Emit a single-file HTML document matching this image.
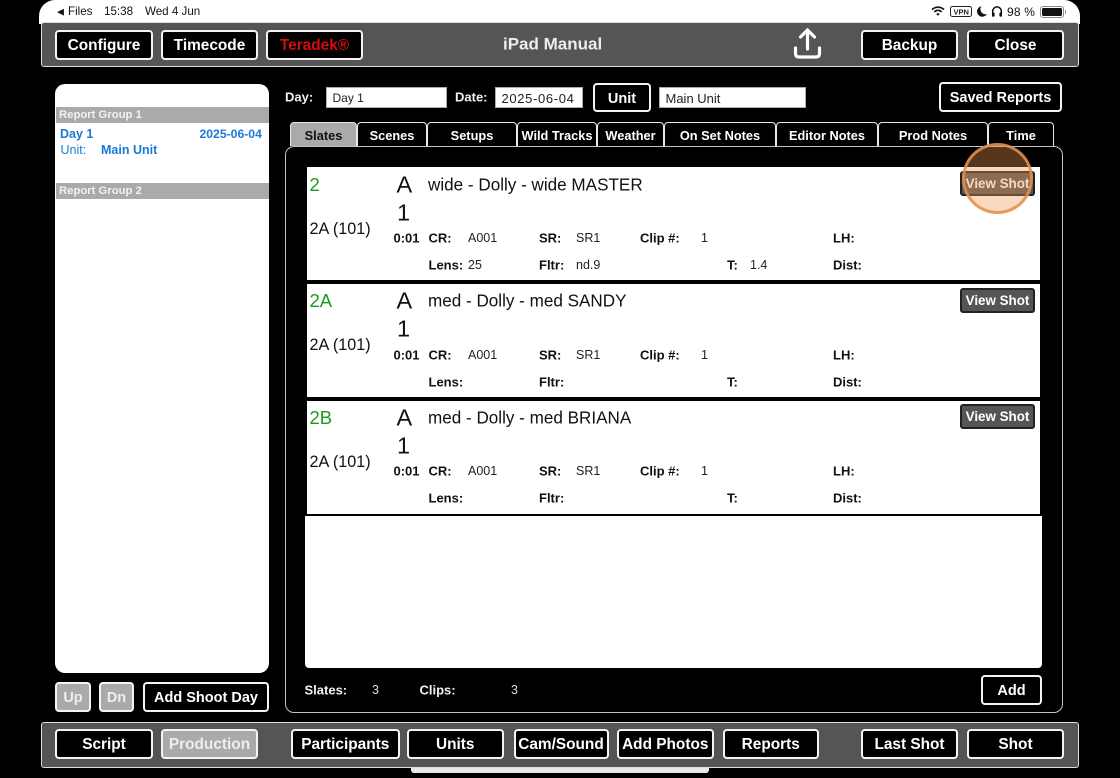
<!DOCTYPE html>
<html><head><meta charset="utf-8"><style>
html,body{margin:0;padding:0;background:#000;}
#p{position:relative;width:1120px;height:778px;overflow:hidden;background:#000;font-family:"Liberation Sans",sans-serif;filter:blur(.35px);}
#p div{position:absolute;box-sizing:border-box;}
.t{white-space:nowrap;transform:translateY(-50%);line-height:1;}
.b{background:#000;border:2px solid #f4f4f4;border-radius:4px;color:#fff;font-weight:bold;font-size:15.4px;display:flex;align-items:center;justify-content:center;white-space:nowrap;padding-top:2px;}
.g{background:#aaa;color:#eee;}
.tab{top:122px;height:24px;background:#000;border:1.5px solid #e8e8e8;border-bottom:0;border-radius:4px 4px 0 0;color:#fff;font-weight:bold;font-size:12.8px;display:flex;align-items:center;justify-content:center;white-space:nowrap;padding-top:2px;}
.inp{background:#fff;border:1.5px solid #aaa;color:#222;font-size:13px;line-height:17px;padding:2px 0 0 5.5px;height:21px;}
.l{font-size:13px;font-weight:bold;color:#111;}
.v{font-size:12.5px;color:#222;}
.big{font-size:23.5px;color:#111;}
.ti{font-size:17.1px;color:#111;}
.gr{font-size:18.5px;color:#1d9a1d;}
.sc{font-size:16.2px;color:#111;}
.vs{left:960px;width:75px;height:25px;background:#555;border:2px solid #222;border-radius:3px;color:#fff;font-size:13.4px;font-weight:bold;display:flex;align-items:center;justify-content:center;white-space:nowrap;}
.row{left:307px;width:733px;height:113px;background:#fff;}
.st{font-size:11.6px;color:#111;}
.gh{left:56px;width:213px;height:16px;background:#aaa;color:#f2f2f2;font-size:11.3px;font-weight:bold;line-height:16px;padding-left:3px;}
.bl{color:#1a7ad6;font-size:12.5px;}
.wl{font-size:13px;font-weight:bold;color:#f0f0f0;}
.wv{font-size:12.5px;color:#ddd;}
</style></head><body><div id="p">

<div style="left:39px;top:0;width:1041px;height:24px;background:#fff;border-radius:16px 16px 0 0"></div>
<div class="t st" style="left:57px;top:12px;font-size:9px">◀</div>
<div class="t st" style="left:68px;top:12px">Files</div>
<div class="t st" style="left:104px;top:12px">15:38</div>
<div class="t st" style="left:145px;top:12px">Wed 4 Jun</div>
<svg style="position:absolute;left:930px;top:5px" width="16" height="12" viewBox="0 0 16 12"><path d="M2 4.6C5.6 1.4 10.4 1.4 14 4.6M4.3 6.9C6.6 4.9 9.4 4.9 11.7 6.9" fill="none" stroke="#111" stroke-width="1.7"/><path d="M6.2 8.9C7.3 8 8.7 8 9.8 8.9L8 10.8Z" fill="#111"/></svg>
<div style="left:950px;top:6px;width:22px;height:11px;border:1px solid #222;border-radius:2.5px"></div>
<div class="t" style="left:953.5px;top:11.5px;font-size:7.5px;font-weight:bold;color:#222">VPN</div>
<svg style="position:absolute;left:976px;top:5px" width="12" height="13" viewBox="0 0 12 13"><path d="M5.5 1.2A5.3 5.3 0 1 0 11 9 5 5 0 0 1 5.5 1.2Z" fill="#111"/></svg>
<svg style="position:absolute;left:991px;top:5px" width="12" height="13" viewBox="0 0 12 13"><path d="M1.7 9V6.2a4.3 4.3 0 0 1 8.6 0V9" fill="none" stroke="#111" stroke-width="1.5"/><rect x="1" y="7.5" width="2.6" height="4.2" rx="1" fill="#111"/><rect x="8.4" y="7.5" width="2.6" height="4.2" rx="1" fill="#111"/></svg>
<div class="t st" style="left:1007px;top:12px;font-size:12px;letter-spacing:.2px">98 %</div>
<div style="left:1040px;top:6px;width:24px;height:11.5px;border:1px solid #888;border-radius:3px"></div>
<div style="left:1041.5px;top:7.5px;width:20px;height:8.5px;background:#111;border-radius:1.5px"></div>
<div style="left:1064.5px;top:10px;width:1.5px;height:4px;background:#999"></div>

<div style="left:41px;top:22px;width:1038px;height:45px;background:#555;border:1.5px solid #ddd;border-radius:3px"></div>
<div class="b" style="left:55px;top:30px;width:98px;height:30px">Configure</div>
<div class="b" style="left:161px;top:30px;width:97px;height:30px">Timecode</div>
<div class="b" style="left:266px;top:30px;width:97px;height:30px;color:#d40d0d">Teradek®</div>
<div class="t" style="left:503px;top:44px;font-size:17px;font-weight:bold;color:#eee">iPad Manual</div>
<svg style="position:absolute;left:792px;top:27px" width="31" height="33" viewBox="0 0 31 33"><path d="M15.500 22V3.500M8.500 10L15.500 3L22.500 10" fill="none" stroke="#fff" stroke-width="3.200" stroke-linecap="round" stroke-linejoin="miter"/><path d="M3.500 21V26.500Q3.500 30 7 30H24Q27.500 30 27.500 26.500V21" fill="none" stroke="#fff" stroke-width="3.200" stroke-linecap="round"/></svg>
<div class="b" style="left:861px;top:30px;width:97px;height:30px">Backup</div>
<div class="b" style="left:967px;top:30px;width:97px;height:30px">Close</div>

<div style="left:55px;top:84px;width:214px;height:589px;background:#fff;border-radius:10px"></div>
<div class="gh" style="top:107px">Report Group 1</div>
<div class="t bl" style="left:60px;top:133.500px;font-weight:bold">Day 1</div>
<div class="t bl" style="left:199.500px;top:133.500px;font-weight:bold;font-size:12.200px">2025-06-04</div>
<div class="t bl" style="left:60.500px;top:149.500px">Unit:</div>
<div class="t bl" style="left:101px;top:149.500px;font-weight:bold">Main Unit</div>
<div class="gh" style="top:183px">Report Group 2</div>

<div class="t wl" style="left:285px;top:97px">Day:</div>
<div class="inp" style="left:326px;top:87px;width:121px;font-size:12px">Day 1</div>
<div class="t wl" style="left:455px;top:97px">Date:</div>
<div class="inp" style="left:495px;top:87px;width:88px;letter-spacing:.65px">2025-06-04</div>
<div class="b" style="left:593px;top:83px;width:58px;height:29px;font-size:14.500px">Unit</div>
<div class="inp" style="left:659px;top:87px;width:147px">Main Unit</div>
<div class="b" style="left:939px;top:82px;width:123px;height:30px;font-size:14.500px">Saved Reports</div>

<div style="left:285px;top:146px;width:778px;height:567px;border:1.200px solid #c4c4c4;border-radius:9px"></div>
<div class="tab" style="left:290px;width:67px;background:#aaa;color:#111">Slates</div>
<div class="tab" style="left:357px;width:70px">Scenes</div>
<div class="tab" style="left:427px;width:90px">Setups</div>
<div class="tab" style="left:517px;width:80px">Wild Tracks</div>
<div class="tab" style="left:597px;width:67px">Weather</div>
<div class="tab" style="left:664px;width:112px">On Set Notes</div>
<div class="tab" style="left:776px;width:102px">Editor Notes</div>
<div class="tab" style="left:878px;width:110px">Prod Notes</div>
<div class="tab" style="left:988px;width:66px">Time</div>

<div style="left:305px;top:516px;width:737px;height:151.500px;background:#fff;border-radius:0 0 4px 4px"></div>

<div class="row" style="top:167px"></div>
<div class="t gr" style="left:309.500px;top:184.500px">2</div>
<div class="t big" style="left:396.500px;top:184.500px">A</div>
<div class="t big" style="left:397px;top:212.500px">1</div>
<div class="t ti" style="left:428px;top:184.500px">wide - Dolly - wide MASTER</div>
<div class="t sc" style="left:309.500px;top:228.500px">2A (101)</div>
<div class="t l" style="left:393.500px;top:238px">0:01</div>
<div class="t l" style="left:428.500px;top:238px">CR:</div>
<div class="t v" style="left:468px;top:238px">A001</div>
<div class="t l" style="left:539px;top:238px">SR:</div>
<div class="t v" style="left:576px;top:238px">SR1</div>
<div class="t l" style="left:640px;top:238px">Clip #:</div>
<div class="t v" style="left:701px;top:238px">1</div>
<div class="t l" style="left:833px;top:238px">LH:</div>
<div class="t l" style="left:428.500px;top:265px">Lens:</div>
<div class="t v" style="left:468px;top:265px">25</div>
<div class="t l" style="left:539px;top:265px">Fltr:</div>
<div class="t v" style="left:576px;top:265px">nd.9</div>
<div class="t l" style="left:727px;top:265px">T:</div>
<div class="t v" style="left:750px;top:265px">1.4</div>
<div class="t l" style="left:833px;top:265px">Dist:</div>
<div class="vs" style="top:171px">View Shot</div>

<div class="row" style="top:284px"></div>
<div class="t gr" style="left:309.500px;top:301px">2A</div>
<div class="t big" style="left:396.500px;top:301px">A</div>
<div class="t big" style="left:397px;top:329px">1</div>
<div class="t ti" style="left:428px;top:301px">med - Dolly - med SANDY</div>
<div class="t sc" style="left:309.500px;top:345px">2A (101)</div>
<div class="t l" style="left:393.500px;top:354.500px">0:01</div>
<div class="t l" style="left:428.500px;top:354.500px">CR:</div>
<div class="t v" style="left:468px;top:354.500px">A001</div>
<div class="t l" style="left:539px;top:354.500px">SR:</div>
<div class="t v" style="left:576px;top:354.500px">SR1</div>
<div class="t l" style="left:640px;top:354.500px">Clip #:</div>
<div class="t v" style="left:701px;top:354.500px">1</div>
<div class="t l" style="left:833px;top:354.500px">LH:</div>
<div class="t l" style="left:428.500px;top:381.500px">Lens:</div>
<div class="t l" style="left:539px;top:381.500px">Fltr:</div>
<div class="t l" style="left:727px;top:381.500px">T:</div>
<div class="t l" style="left:833px;top:381.500px">Dist:</div>
<div class="vs" style="top:288px">View Shot</div>

<div class="row" style="top:400.500px"></div>
<div class="t gr" style="left:309.500px;top:417.500px">2B</div>
<div class="t big" style="left:396.500px;top:417.500px">A</div>
<div class="t big" style="left:397px;top:445.500px">1</div>
<div class="t ti" style="left:428px;top:417.500px">med - Dolly - med BRIANA</div>
<div class="t sc" style="left:309.500px;top:461.500px">2A (101)</div>
<div class="t l" style="left:393.500px;top:471px">0:01</div>
<div class="t l" style="left:428.500px;top:471px">CR:</div>
<div class="t v" style="left:468px;top:471px">A001</div>
<div class="t l" style="left:539px;top:471px">SR:</div>
<div class="t v" style="left:576px;top:471px">SR1</div>
<div class="t l" style="left:640px;top:471px">Clip #:</div>
<div class="t v" style="left:701px;top:471px">1</div>
<div class="t l" style="left:833px;top:471px">LH:</div>
<div class="t l" style="left:428.500px;top:498px">Lens:</div>
<div class="t l" style="left:539px;top:498px">Fltr:</div>
<div class="t l" style="left:727px;top:498px">T:</div>
<div class="t l" style="left:833px;top:498px">Dist:</div>
<div class="vs" style="top:404px">View Shot</div>

<div class="t wl" style="left:304.500px;top:690px">Slates:</div>
<div class="t wv" style="left:372px;top:690px">3</div>
<div class="t wl" style="left:419.500px;top:690px">Clips:</div>
<div class="t wv" style="left:511px;top:690px">3</div>
<div class="b" style="left:981px;top:675px;width:61px;height:30px;font-size:14.500px">Add</div>

<div class="b g" style="left:55px;top:682px;width:36px;height:30px;font-size:14.500px">Up</div>
<div class="b g" style="left:99px;top:682px;width:35px;height:30px;font-size:14.500px">Dn</div>
<div class="b" style="left:143px;top:682px;width:126px;height:30px;font-size:14.500px">Add Shoot Day</div>

<div style="left:411px;top:765px;width:298px;height:7.500px;background:#e8e8e8;border-radius:0 0 3px 3px"></div>
<div style="left:41px;top:722px;width:1038px;height:45.500px;background:#555;border:1.500px solid #ddd;border-radius:3px"></div>
<div class="b" style="left:55px;top:729px;width:98px;height:30px">Script</div>
<div class="b g" style="left:161px;top:729px;width:97px;height:30px">Production</div>
<div class="b" style="left:291px;top:729px;width:108.500px;height:30px">Participants</div>
<div class="b" style="left:407px;top:729px;width:96.500px;height:30px">Units</div>
<div class="b" style="left:513.500px;top:729px;width:95px;height:30px">Cam/Sound</div>
<div class="b" style="left:617px;top:729px;width:96.500px;height:30px">Add Photos</div>
<div class="b" style="left:722.500px;top:729px;width:96.500px;height:30px">Reports</div>
<div class="b" style="left:861px;top:729px;width:97px;height:30px">Last Shot</div>
<div class="b" style="left:967px;top:729px;width:97px;height:30px">Shot</div>

<div style="left:962px;top:143px;width:71px;height:71px;border-radius:50%;background:rgba(242,150,75,.36);border:3px solid rgba(226,145,80,.85)"></div>
</div></body></html>
